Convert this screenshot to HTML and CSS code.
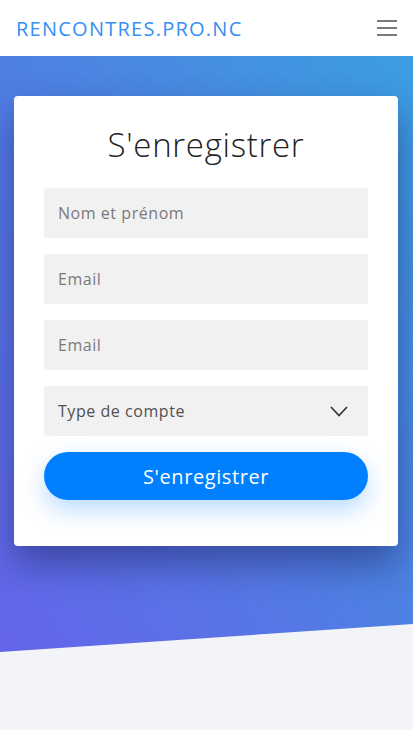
FILE: index.html
```html
<!DOCTYPE html>
<html lang="fr">
<head>
<meta charset="utf-8">
<title>Rencontres</title>
<link rel="stylesheet" href="styles.css">
</head>
<body>
<header class="topbar">
  <a class="brand" href="#">RENCONTRES.PRO.NC</a>
  <button class="burger" aria-label="menu">
    <span></span><span></span><span></span>
  </button>
</header>
<main class="hero">
  <section class="card">
    <h1 class="title">S'enregistrer</h1>
    <form class="form">
      <input class="field" type="text" placeholder="Nom et prénom">
      <input class="field" type="email" placeholder="Email">
      <input class="field" type="email" placeholder="Email">
      <div class="field select">
        <span>Type de compte</span>
        <svg width="18" height="11" viewBox="0 0 18 11"><path d="M1 1 L9 9.5 L17 1" fill="none" stroke="#333" stroke-width="1.6"/></svg>
      </div>
      <button class="submit" type="button">S'enregistrer</button>
    </form>
  </section>
</main>
</body>
</html>
```
FILE: styles.css
```css
* { box-sizing: border-box; }
html, body { margin: 0; padding: 0; }
body {
  background: #f2f4f8;
  font-family: "Open Sans", "Noto Sans", sans-serif;
  height: 730px;
  overflow: hidden;
}
.topbar {
  height: 56px;
  background: #fff;
  display: flex;
  align-items: center;
  justify-content: space-between;
  padding: 0 16px;
}
.brand {
  color: #3490f5;
  text-decoration: none;
  font-size: 20px;
  font-weight: 400;
  letter-spacing: 1.25px;
}
.burger {
  background: none;
  border: 0;
  padding: 0;
  width: 20px;
  display: flex;
  flex-direction: column;
  gap: 5px;
}
.burger span {
  display: block;
  height: 2px;
  background: #7a7a7a;
}
.hero {
  height: 596px;
  padding: 40px 15px 0 14px;
  background: linear-gradient(to top right, #6564ea 0%, #4f7fe3 50%, #3c9ee0 100%);
  clip-path: polygon(0 0, 100% 0, 100% 568px, 0 596px);
}
.card {
  background: #fff;
  border-radius: 4px;
  height: 450px;
  padding: 28px 30px 0;
  box-shadow: 0 18px 36px rgba(20, 25, 80, 0.45);
}
.title {
  margin: 0 0 22px;
  text-align: center;
  font-weight: 300;
  font-size: 33px;
  line-height: 42px;
  letter-spacing: 0.7px;
  color: #222;
}
.form {
  display: flex;
  flex-direction: column;
  gap: 16px;
}
.field {
  height: 50px;
  border: 0;
  border-radius: 3px;
  background: #f1f1f1;
  padding: 0 14px;
  font-family: inherit;
  font-size: 16px;
  letter-spacing: 0.55px;
  color: #555;
  outline: none;
}
.field::placeholder { color: #7a7a7a; }
.select {
  display: flex;
  align-items: center;
  justify-content: space-between;
  padding-right: 20px;
  color: #505050;
}
.submit {
  height: 48px;
  border: 0;
  border-radius: 24px;
  background: #0080ff;
  color: #fff;
  font-family: inherit;
  font-size: 20px;
  letter-spacing: 0.6px;
  box-shadow: 0 10px 24px rgba(0, 128, 255, 0.28);
}
```
